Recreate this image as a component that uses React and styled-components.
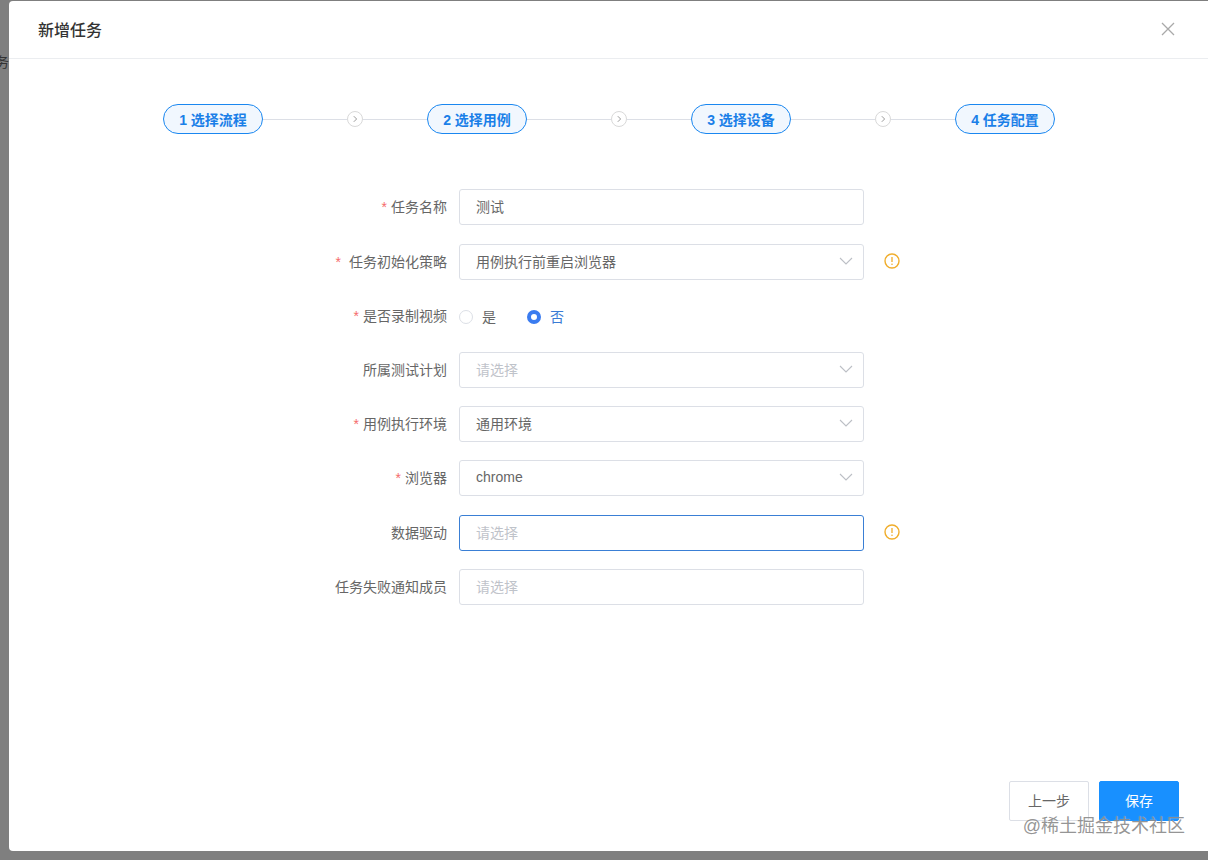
import React from 'react';
import styled, { createGlobalStyle } from 'styled-components';

const FONT = '"Liberation Sans", "Noto Sans CJK SC", sans-serif';

const steps = ['1 选择流程', '2 选择用例', '3 选择设备', '4 任务配置'];

function ChevronDown() {
  return (
    <ArrowIcon viewBox="0 0 14 8">
      <path d="M1 1l6 6 6-6" fill="none" stroke="currentColor" strokeWidth="1.1" />
    </ArrowIcon>
  );
}

function WarnIcon() {
  return (
    <Warn viewBox="0 0 16 16">
      <circle cx="8" cy="8" r="7" fill="none" stroke="currentColor" strokeWidth="1.4" />
      <path d="M8 4v5" stroke="currentColor" strokeWidth="1.3" />
      <circle cx="8" cy="11.3" r="0.8" fill="currentColor" />
    </Warn>
  );
}

function Field({ label, required, wideStar, loose, warn, children }) {
  return (
    <Row $loose={loose}>
      <Label>
        {required && <Star $wide={wideStar}>*</Star>}
        {label}
      </Label>
      {children}
      {warn && <WarnIcon />}
    </Row>
  );
}

function App() {
  return (
    <>
      <GlobalStyle />
      <Backdrop>
        <Behind>
          <BehindText>务</BehindText>
        </Behind>
        <Modal>
          <Header>
            <Title>新增任务</Title>
            <Close viewBox="0 0 16 16">
              <path d="M2 2l12 12M14 2L2 14" stroke="currentColor" strokeWidth="1.3" fill="none" />
            </Close>
          </Header>
          <Body>
            <Stepper>
              {steps.map((s, i) => (
                <React.Fragment key={s}>
                  <StepPill>{s}</StepPill>
                  {i < steps.length - 1 && (
                    <Connector>
                      <LineLong />
                      <StepDot>
                        <svg viewBox="0 0 16 16" width="16" height="16">
                          <path d="M6.8 5.2L9.6 8l-2.8 2.8" fill="none" stroke="currentColor" strokeWidth="1" />
                        </svg>
                      </StepDot>
                      <LineShort />
                    </Connector>
                  )}
                </React.Fragment>
              ))}
            </Stepper>
            <Form>
              <Field label="任务名称" required loose>
                <InputBox>测试</InputBox>
              </Field>
              <Field label="任务初始化策略" required wideStar warn>
                <InputBox>
                  用例执行前重启浏览器
                  <ChevronDown />
                </InputBox>
              </Field>
              <Field label="是否录制视频" required>
                <RadioGroup>
                  <RadioItem>
                    <Radio />
                    是
                  </RadioItem>
                  <RadioItem $checked>
                    <Radio $checked />
                    否
                  </RadioItem>
                </RadioGroup>
              </Field>
              <Field label="所属测试计划">
                <InputBox $placeholder>
                  请选择
                  <ChevronDown />
                </InputBox>
              </Field>
              <Field label="用例执行环境" required>
                <InputBox>
                  通用环境
                  <ChevronDown />
                </InputBox>
              </Field>
              <Field label="浏览器" required loose>
                <InputBox>
                  chrome
                  <ChevronDown />
                </InputBox>
              </Field>
              <Field label="数据驱动" warn>
                <InputBox $placeholder $focused>请选择</InputBox>
              </Field>
              <Field label="任务失败通知成员">
                <InputBox $placeholder>请选择</InputBox>
              </Field>
            </Form>
          </Body>
          <Footer>
            <GhostButton>上一步</GhostButton>
            <PrimaryButton>保存</PrimaryButton>
          </Footer>
        </Modal>
        <Watermark>@稀土掘金技术社区</Watermark>
      </Backdrop>
    </>
  );
}

const GlobalStyle = createGlobalStyle`
  html, body {
    margin: 0;
    padding: 0;
    height: 100%;
    overflow: hidden;
    background: #7f7f7f;
    font-family: ${FONT};
  }
`;

const Backdrop = styled.div`
  position: relative;
  display: flex;
  width: 1208px;
  height: 860px;
  padding: 1px 0 9px;
  box-sizing: border-box;
  background: #7f7f7f;
`;

const Behind = styled.div`
  width: 9px;
  flex: none;
  overflow: hidden;
  padding-top: 51px;
  box-sizing: border-box;
`;

const BehindText = styled.div`
  width: 14px;
  margin-left: -5px;
  font-size: 14px;
  line-height: 20px;
  color: #333;
`;

const Modal = styled.div`
  flex: 1;
  display: flex;
  flex-direction: column;
  background: #fff;
  border-radius: 4px 0 0 4px;
`;

const Header = styled.div`
  height: 55px;
  flex: none;
  display: flex;
  align-items: center;
  justify-content: space-between;
  padding: 0 32px 2px 29px;
  border-bottom: 1px solid #ebedf0;
`;

const Title = styled.div`
  font-size: 16px;
  font-weight: 500;
  color: #333;
`;

const Close = styled.svg`
  width: 16px;
  height: 16px;
  color: #a9a9a9;
`;

const Body = styled.div`
  flex: 1;
  padding-top: 45px;
`;

const Stepper = styled.div`
  display: flex;
  align-items: center;
  margin-left: 154px;
`;

const StepPill = styled.div`
  width: 100px;
  height: 30px;
  flex: none;
  box-sizing: border-box;
  display: flex;
  align-items: center;
  justify-content: center;
  border: 1px solid #1a87f0;
  border-radius: 15px;
  background: #f1f7fe;
  color: #1a7fe8;
  font-size: 14px;
  font-weight: 700;
`;

const Connector = styled.div`
  display: flex;
  align-items: center;
  width: 164px;
  flex: none;
`;

const LineLong = styled.div`
  width: 84px;
  height: 1px;
  background: #dcdfe6;
`;

const LineShort = styled(LineLong)`
  width: 64px;
`;

const StepDot = styled.div`
  width: 16px;
  height: 16px;
  flex: none;
  box-sizing: border-box;
  border: 1px solid #d9d9d9;
  border-radius: 50%;
  color: #9a9a9a;
  display: flex;
  align-items: center;
  justify-content: center;

  svg {
    flex: none;
  }
`;

const Form = styled.div`
  margin-top: 55px;
  margin-left: 154px;
`;

const Row = styled.div`
  display: flex;
  align-items: center;
  height: 36px;
  margin-bottom: ${(p) => (p.$loose ? '19px' : '18px')};
`;

const Label = styled.div`
  width: 284px;
  margin-right: 12px;
  padding-bottom: 2px;
  flex: none;
  text-align: right;
  font-size: 14px;
  color: #666;
`;

const Star = styled.span`
  color: #f56c6c;
  margin-right: ${(p) => (p.$wide ? '8px' : '4px')};
`;

const InputBox = styled.div`
  width: 405px;
  height: 36px;
  box-sizing: border-box;
  display: flex;
  align-items: center;
  justify-content: space-between;
  padding: 0 16px 2px;
  border: 1px solid ${(p) => (p.$focused ? '#3a7fd5' : '#dcdfe6')};
  border-radius: 3px;
  font-size: 14px;
  color: ${(p) => (p.$placeholder ? '#bfc3ca' : '#666')};
`;

const ArrowIcon = styled.svg`
  width: 14px;
  height: 8px;
  margin-right: -6px;
  color: #bcbfc5;
`;

const Warn = styled.svg`
  width: 16px;
  height: 16px;
  margin: -2px 0 0 20px;
  color: #f0ad2b;
`;

const RadioGroup = styled.div`
  display: flex;
  align-items: center;
  gap: 31px;
`;

const RadioItem = styled.div`
  display: flex;
  align-items: center;
  gap: 9px;
  font-size: 14px;
  color: ${(p) => (p.$checked ? '#3a7bd5' : '#666')};
`;

const Radio = styled.span`
  width: 14px;
  height: 14px;
  margin-top: 1px;
  box-sizing: border-box;
  border-radius: 50%;
  border: ${(p) => (p.$checked ? '4px solid #3b7cf0' : '1px solid #dcdfe6')};
  background: #fff;
`;

const Footer = styled.div`
  display: flex;
  justify-content: flex-end;
  gap: 10px;
  padding: 0 29px 30px 0;
`;

const GhostButton = styled.button`
  width: 80px;
  height: 40px;
  padding: 0 0 2px;
  border: 1px solid #dcdfe6;
  border-radius: 2px;
  background: #fff;
  color: #666;
  font-family: ${FONT};
  font-size: 14px;
`;

const PrimaryButton = styled(GhostButton)`
  border-color: #1890ff;
  background: #1890ff;
  color: #fff;
`;

const Watermark = styled.div`
  position: absolute;
  right: 23px;
  top: 814px;
  font-size: 18px;
  line-height: 24px;
  color: rgba(130, 130, 130, 0.85);
  text-shadow: 0 0 1px rgba(255, 255, 255, 0.6);
`;

export default App;
